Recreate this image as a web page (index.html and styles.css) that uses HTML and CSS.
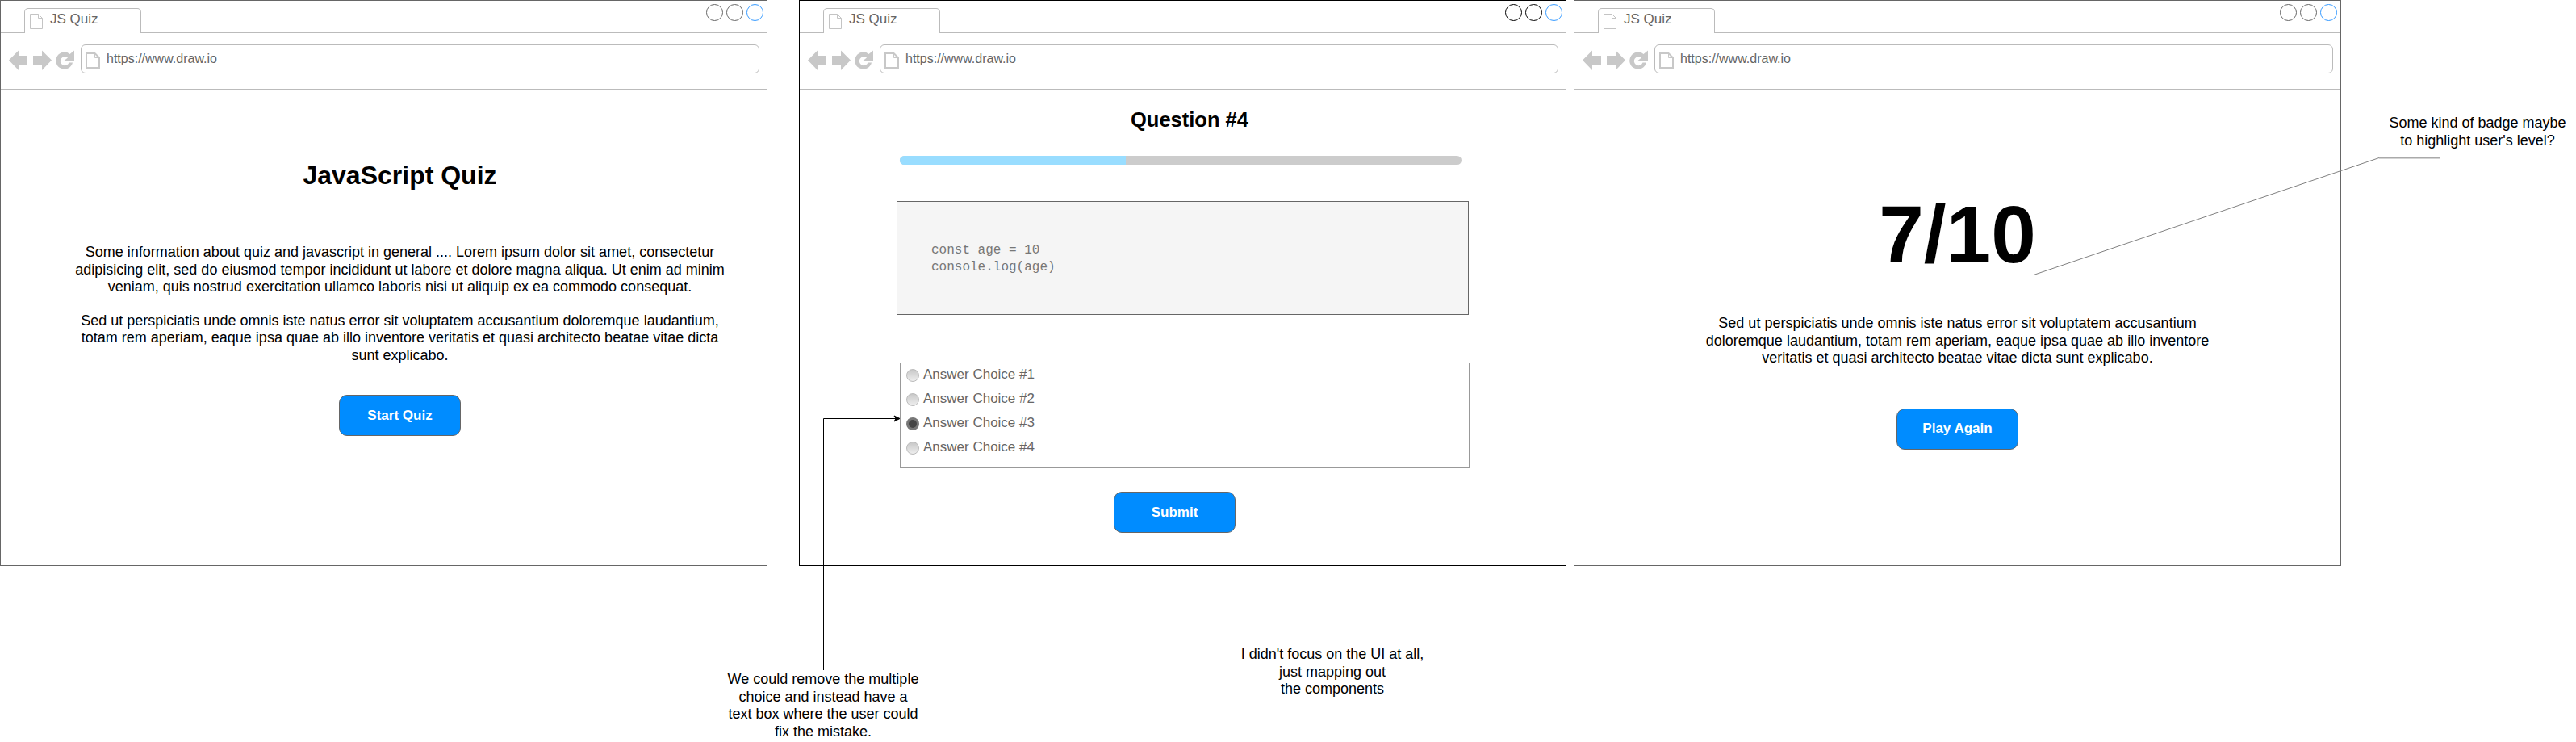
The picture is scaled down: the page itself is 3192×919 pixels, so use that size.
FILE: index.html
```html
<!DOCTYPE html>
<html lang="en">
<head>
<meta charset="utf-8">
<title>JS Quiz wireframes</title>
<link rel="stylesheet" href="styles.css">
</head>
<body>
<svg class="defs" width="0" height="0" aria-hidden="true">
  <symbol id="tabpage" viewBox="0 0 16 19"><path d="M.5 .5H10.500L15.500 5.500V18.500H.5Z M10.500 .5V5.500H15.500" fill="#fff" stroke="#c4c4c4" stroke-width="1"/></symbol>
  <symbol id="urlpage" viewBox="0 0 18 20"><path d="M1 1H11.500L17 6.500V19H1Z" fill="#fff" stroke="#c8c8c8" stroke-width="2"/><path d="M11.500 1V6.500H17" fill="none" stroke="#c8c8c8"/></symbol>
  <symbol id="navicons" viewBox="0 0 84 26"><path d="M0 12.500L12 .5V7H23V18H12V25Z" fill="#c8c8c8"/><path d="M53 12.500L41 .5V7H30V18H41V25Z" fill="#c8c8c8"/><path d="M79 15.500A10.500 10.500 0 1 1 75.500 5L81 .5V13H68.500L73 9.500A5.500 5.500 0 1 0 74.500 15.500Z" fill="#c8c8c8"/></symbol>
</svg>
<main class="canvas">

  <section class="browser first">
    <div class="titlebar">
      <div class="tab"><svg class="tab-icon"><use href="#tabpage"/></svg><span>JS Quiz</span></div>
      <div class="dots"><i class="dot"></i><i class="dot"></i><i class="dot dot-blue"></i></div>
    </div>
    <div class="toolbar">
      <svg class="nav"><use href="#navicons"/></svg>
      <div class="urlbar"><svg class="url-icon"><use href="#urlpage"/></svg><span>https://www.draw.io</span></div>
    </div>
    <div class="page page-intro">
      <h1 class="intro-title">JavaScript Quiz</h1>
      <p class="copy intro-a">Some information about quiz and javascript in general .... Lorem ipsum dolor sit amet, consectetur<br>adipisicing elit, sed do eiusmod tempor incididunt ut labore et dolore magna aliqua. Ut enim ad minim<br>veniam, quis nostrud exercitation ullamco laboris nisi ut aliquip ex ea commodo consequat.</p>
      <p class="copy intro-b">Sed ut perspiciatis unde omnis iste natus error sit voluptatem accusantium doloremque laudantium,<br>totam rem aperiam, eaque ipsa quae ab illo inventore veritatis et quasi architecto beatae vitae dicta<br>sunt explicabo.</p>
      <button class="cta intro-cta">Start Quiz</button>
    </div>
  </section>

  <section class="browser second">
    <div class="titlebar">
      <div class="tab"><svg class="tab-icon"><use href="#tabpage"/></svg><span>JS Quiz</span></div>
      <div class="dots"><i class="dot"></i><i class="dot"></i><i class="dot dot-blue"></i></div>
    </div>
    <div class="toolbar">
      <svg class="nav"><use href="#navicons"/></svg>
      <div class="urlbar"><svg class="url-icon"><use href="#urlpage"/></svg><span>https://www.draw.io</span></div>
    </div>
    <div class="page page-question">
      <h2 class="question-title">Question #4</h2>
      <div class="progress"><div class="progress-fill"></div></div>
      <pre class="code">const age = 10
console.log(age)</pre>
      <div class="choices">
        <div class="choice"><i class="radio"></i>Answer Choice #1</div>
        <div class="choice"><i class="radio"></i>Answer Choice #2</div>
        <div class="choice"><i class="radio radio-on"></i>Answer Choice #3</div>
        <div class="choice"><i class="radio"></i>Answer Choice #4</div>
      </div>
      <button class="cta submit">Submit</button>
    </div>
  </section>

  <section class="browser third">
    <div class="titlebar">
      <div class="tab"><svg class="tab-icon"><use href="#tabpage"/></svg><span>JS Quiz</span></div>
      <div class="dots"><i class="dot"></i><i class="dot"></i><i class="dot dot-blue"></i></div>
    </div>
    <div class="toolbar">
      <svg class="nav"><use href="#navicons"/></svg>
      <div class="urlbar"><svg class="url-icon"><use href="#urlpage"/></svg><span>https://www.draw.io</span></div>
    </div>
    <div class="page page-score">
      <div class="score">7/10</div>
      <p class="copy score-copy">Sed ut perspiciatis unde omnis iste natus error sit voluptatem accusantium<br>doloremque laudantium, totam rem aperiam, eaque ipsa quae ab illo inventore<br>veritatis et quasi architecto beatae vitae dicta sunt explicabo.</p>
      <button class="cta score-cta">Play Again</button>
    </div>
  </section>

  <svg class="wires" width="3192" height="919">
    <path d="M1020.500 830V518.500H1110" fill="none" stroke="#000" stroke-width="1"/>
    <path d="M1115 518.500L1108 515L1110 518.500L1108 522Z" fill="#000" stroke="#000"/>
    <path d="M2520 340.500L2948 195.500" fill="none" stroke="#808080" stroke-width="1"/>
    <path d="M2948 195.500H3023" fill="none" stroke="#aaa" stroke-width="2"/>
  </svg>

  <p class="note note-choice">We could remove the multiple<br>choice and instead have a<br>text box where the user could<br>fix the mistake.</p>
  <p class="note note-ui">I didn't focus on the UI at all,<br>just mapping out<br>the components</p>
  <p class="note note-badge">Some kind of badge maybe<br>to highlight user's level?</p>
</main>
</body>
</html>
```
FILE: styles.css
```css
* { box-sizing: border-box; }
html, body { margin: 0; background: #fff; overflow: hidden; }
body { font-family: "Liberation Sans", Arial, sans-serif; color: #000; }
.defs { position: absolute; }
.canvas { position: relative; width: 3192px; height: 919px; }

.browser { position: absolute; top: 0; width: 951px; height: 701px; border: 1px solid #666; background: #fff; }
.first { left: 0; }
.second { left: 990px; border-color: #000; }
.third { left: 1950px; }

.titlebar { position: relative; height: 40px; border-bottom: 1px solid #bbb; }
.tab { position: absolute; left: 29px; top: 9px; width: 145px; height: 31px; padding: 0 0 0 6px; display: flex; align-items: flex-start; background: #fff; border: 1px solid #bbb; border-bottom: 0; border-radius: 5px 5px 0 0; color: #666; font-size: 17px; line-height: 24px; }
.tab span { margin: 1px 0 0 9px; }
.tab-icon { width: 16px; height: 19px; margin-top: 6px; }

.dots { position: absolute; right: 4px; top: 4px; display: flex; gap: 4px; }
.dot { display: block; width: 21px; height: 21px; border: 1px solid #666; border-radius: 50%; }
.second .dot { border-color: #000; }
.dot.dot-blue, .second .dot.dot-blue { border-color: #3399ff; }

.toolbar { height: 70px; border-bottom: 1px solid #bbb; display: flex; align-items: flex-start; padding: 14px 9px 0 10px; }
.nav { width: 84px; height: 26px; margin: 7px 5px 0 0; flex: none; }
.urlbar { flex: 1; height: 36px; border: 1px solid #bbb; border-radius: 6px; display: flex; align-items: center; padding-left: 5px; color: #666; font-size: 16px; }
.url-icon { width: 18px; height: 20px; margin: 3px 8px 0 0; flex: none; }
.urlbar span { margin-top: 0; }

.page { display: flex; flex-direction: column; }
.copy { margin: 0; font-size: 18px; line-height: 21.500px; text-align: center; }
.cta { display: block; width: 151px; height: 51px; padding: 0; background: #008cff; border: 1px solid #666; border-radius: 10px; color: #fff; font: bold 17px "Liberation Sans", Arial, sans-serif; }

.page-intro { align-items: center; padding-left: 40px; }
.intro-title { margin: 86px 0 0; font-size: 32px; line-height: 40px; font-weight: bold; }
.intro-a { margin-top: 65px; }
.intro-b { margin-top: 20px; }
.intro-cta { margin-top: 38px; }

.page-question { padding-left: 124px; }
.question-title { margin: 21px 0 0 286px; font-size: 25.500px; line-height: 32px; font-weight: bold; white-space: nowrap; }
.progress { width: 696px; height: 11px; margin-top: 29px; background: #ccc; border-radius: 6px; overflow: hidden; }
.progress-fill { width: 280px; height: 100%; background: #99ddff; }
.code { width: 709px; height: 141px; margin: 45px 0 0 -4px; padding: 50px 0 0 42px; background: #f5f5f5; border: 1px solid #666; color: #777; font: 16px/21px "Liberation Mono", "Courier New", monospace; }
.choices { width: 706px; height: 131px; margin-top: 59px; border: 1px solid #999; display: flex; flex-direction: column; }
.choice { display: flex; align-items: center; height: 30px; padding: 0 0 3px 7px; color: #666; font-size: 17px; }
.radio { display: block; width: 16px; height: 16px; margin: 3px 5px 0 0; border: 1px solid #bbb; border-radius: 50%; background: linear-gradient(#c8c8c8, #eee); }
.radio-on { border: 3px solid #777; background: #444; }
.submit { margin: 29px 0 0 265px; }

.page-score { align-items: center; }
.score { margin-top: 119px; font-size: 100px; line-height: 120px; font-weight: bold; }
.score-copy { margin-top: 40px; }
.score-cta { margin-top: 51px; }

.wires { position: absolute; left: 0; top: 0; pointer-events: none; }
.note { position: absolute; margin: 0; font-size: 18px; line-height: 21.500px; text-align: center; white-space: nowrap; transform: translateX(-50%); }
.note-choice { left: 1020px; top: 831px; }
.note-ui { left: 1651px; top: 800px; }
.note-badge { left: 3070px; top: 142px; }
```
